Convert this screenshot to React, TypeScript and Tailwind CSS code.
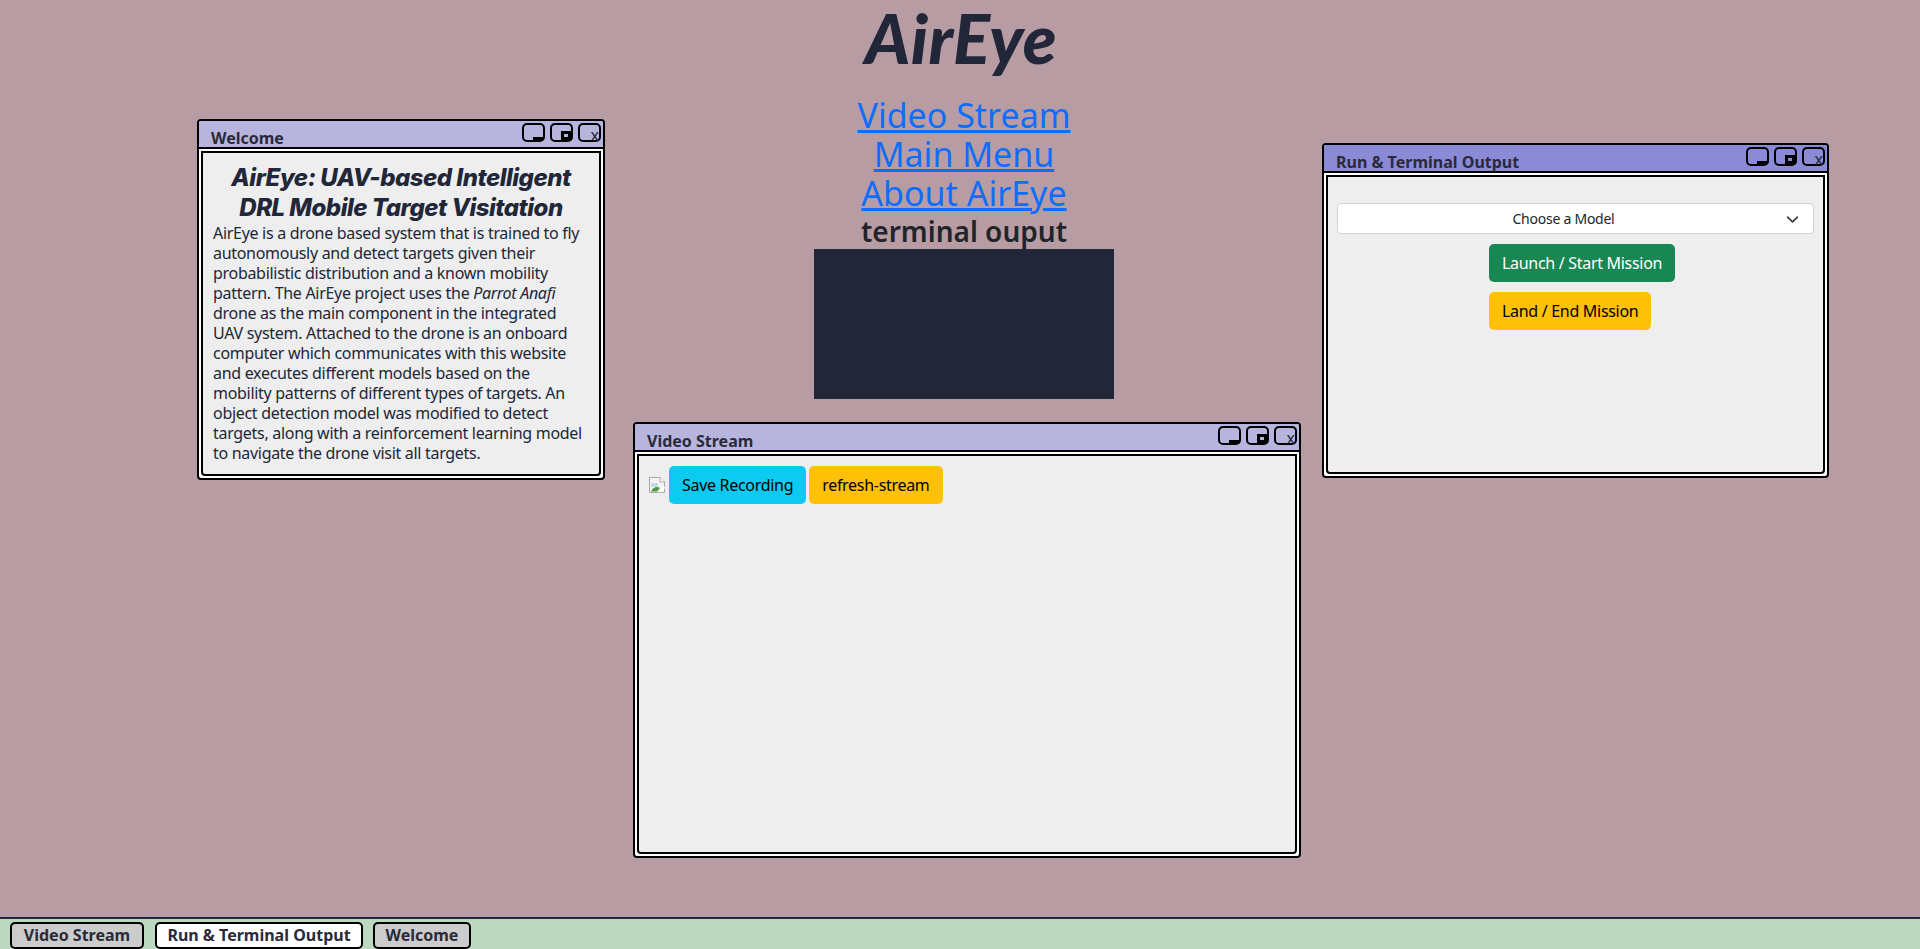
import type { ReactNode } from 'react'

const uiFont = "font-['Noto_Sans','Open_Sans',sans-serif]"

function WindowControls() {
  return (
    <div className="absolute top-[2px] right-[2px] flex gap-[5px]">
      <span className="relative block w-[23px] h-[19px] border-2 border-black rounded-[5px]">
        <span className="absolute right-0 bottom-0 w-[10px] h-[3px] bg-black" />
      </span>
      <span className="relative block w-[23px] h-[19px] border-2 border-black rounded-[5px]">
        <span className="absolute right-0 bottom-0 w-[10px] h-[9px] border-[3px] border-black" />
      </span>
      <span className="relative block w-[23px] h-[19px] border-2 border-black rounded-[5px]">
        <span className="absolute right-0 bottom-[-3px] text-[16px] leading-[16px] text-[#212738]">x</span>
      </span>
    </div>
  )
}

function DesktopWindow({ title, active, className, children }: { title: string; active?: boolean; className: string; children: ReactNode }) {
  return (
    <section className={`absolute flex flex-col bg-white border-2 border-black rounded-[4px] ${className}`}>
      <header className={`relative h-[28px] shrink-0 border-b-2 border-black rounded-t-[2px] ${active ? 'bg-[#8a8ad6]' : 'bg-[#b7b5dd]'}`}>
        <span className="absolute left-[12px] top-[7px] text-[16px] leading-[20px] font-bold text-[#2a2a3a] whitespace-nowrap">{title}</span>
        <WindowControls />
      </header>
      <div className="flex-1 m-[2px] border-2 border-black rounded-b-[4px] bg-[#eeeeee] text-[#212738] min-h-0">
        {children}
      </div>
    </section>
  )
}

function BrokenImage() {
  return (
    <svg width="16" height="16" viewBox="0 0 16 16" className="shrink-0 mr-[1px]">
      <path d="M0.5 0.5H11L15.5 5V15.5H0.5Z" fill="#f4f4f4" stroke="#a8a8a8" />
      <path d="M11 0.5V5H15.5" fill="#ffffff" stroke="#a8a8a8" />
      <path d="M2 6h7v4H2Z" fill="#c7d6f0" />
      <path d="M2 14.5C4 10 8 9 11 11l-3 3.5Z" fill="#4f9a3c" />
      <path d="M11 15L15.5 10" stroke="#ffffff" strokeWidth="2" />
    </svg>
  )
}

function Button({ color, children }: { color: string; children: ReactNode }) {
  return (
    <button className={`h-[38px] px-[13px] rounded-[5px] text-[16px] leading-[24px] tracking-[-0.3px] whitespace-nowrap ${color}`}>
      {children}
    </button>
  )
}

function TaskItem({ active, className, children }: { active?: boolean; className: string; children: ReactNode }) {
  return (
    <span className={`flex items-center justify-center h-[27px] pb-[2px] border-2 border-black rounded-[5px] text-[16px] font-bold text-[#2a2a3a] whitespace-nowrap ${active ? 'bg-white' : 'bg-[#cccccc]'} ${className}`}>
      {children}
    </span>
  )
}

export default function App() {
  return (
    <div className={`relative h-[949px] flex flex-col overflow-hidden bg-[#b89ca3] ${uiFont}`}>
      {/* Center column */}
      <main className="flex-1 flex flex-col items-center pl-[8px]">
        <h1 className="mr-[6px] font-['Lato',sans-serif] italic font-black text-[69px] leading-[75px] tracking-[0.4px] text-[#212738]">AirEye</h1>
        <nav className="mt-[21px] flex flex-col items-center text-[34px] leading-[39px]">
          <a href="#video" className="text-[#0d6efd] underline">Video Stream</a>
          <a href="#menu" className="text-[#0d6efd] underline">Main Menu</a>
          <a href="#about" className="text-[#0d6efd] underline">About AirEye</a>
        </nav>
        <h3 className="mt-[1px] text-[28px] leading-[35px] font-semibold text-[#212529]">terminal ouput</h3>
        <div className="w-[300px] h-[150px] bg-[#212738]" />
      </main>

      {/* Windows */}
      <DesktopWindow title="Welcome" className="left-[197px] top-[119px] w-[408px] h-[361px]">
        <div className="px-[10px] pt-[10px]">
          <h2 className="font-['Inter',sans-serif] italic font-extrabold text-[24px] leading-[30px] tracking-[-0.5px] text-center text-[#212738]">
            AirEye: UAV-based Intelligent DRL Mobile Target Visitation
          </h2>
          <p className="text-[16px] leading-[20px] tracking-[-0.3px]">
            AirEye is a drone based system that is trained to fly autonomously and detect targets given their probabilistic distribution and a known mobility pattern. The AirEye project uses the <em>Parrot Anafi</em> drone as the main component in the integrated UAV system. Attached to the drone is an onboard computer which communicates with this website and executes different models based on the mobility patterns of different types of targets. An object detection model was modified to detect targets, along with a reinforcement learning model to navigate the drone visit all targets.
          </p>
        </div>
      </DesktopWindow>

      <DesktopWindow title="Video Stream" className="left-[633px] top-[422px] w-[668px] h-[436px]">
        <div className="flex items-center gap-[3px] pl-[10px] pt-[10px]">
          <BrokenImage />
          <Button color="bg-[#0dcaf0] text-black">Save Recording</Button>
          <Button color="bg-[#ffc107] text-black">refresh-stream</Button>
        </div>
      </DesktopWindow>

      <DesktopWindow active title="Run & Terminal Output" className="left-[1322px] top-[143px] w-[507px] h-[335px]">
        <div className="px-[9px] pt-[26px] flex flex-col items-start">
          <div className="relative w-full h-[31px] flex items-center justify-center pr-[24px] bg-white border border-[#ced4da] rounded-[4px] text-[14px] tracking-[-0.25px] text-[#212529]">
            Choose a Model
            <svg width="13" height="13" viewBox="0 0 16 16" className="absolute right-[14px] top-[9px]">
              <path d="M2 5l6 6 6-6" fill="none" stroke="#343a40" strokeWidth="2" strokeLinecap="round" strokeLinejoin="round" />
            </svg>
          </div>
          <div className="ml-[152px] mt-[10px] flex flex-col items-start gap-[10px]">
            <Button color="bg-[#198754] text-white">Launch / Start Mission</Button>
            <Button color="bg-[#ffc107] text-black">Land / End Mission</Button>
          </div>
        </div>
      </DesktopWindow>

      {/* Taskbar */}
      <footer className="h-[32px] shrink-0 flex items-start pt-[3px] pl-[10px] bg-[#bdd8c0] border-t-2 border-[#212738]">
        <TaskItem className="w-[134px]">Video Stream</TaskItem>
        <TaskItem active className="w-[208px] ml-[11px]">Run &amp; Terminal Output</TaskItem>
        <TaskItem className="w-[98px] ml-[10px]">Welcome</TaskItem>
      </footer>
    </div>
  )
}
